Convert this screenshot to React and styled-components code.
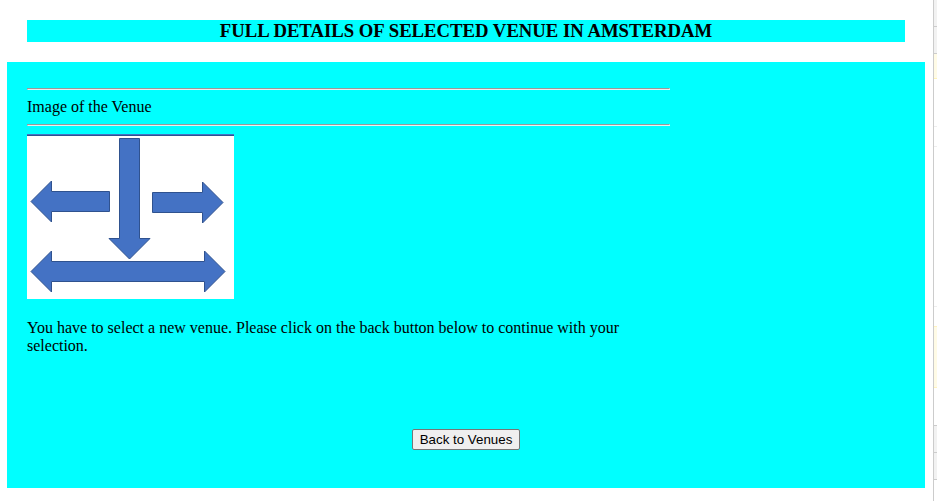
import React from "react";
import styled, { createGlobalStyle } from "styled-components";

const GlobalStyle = createGlobalStyle`
  * { box-sizing: border-box; }
  body {
    margin: 0;
    background: #fff;
    color: #000;
    font: 16px/18px "Liberation Serif", "Times New Roman", serif;
    overflow: hidden;
  }
`;

const Window = styled.div`
  display: flex;
  height: 501px;
`;

const Page = styled.main`
  width: 933px;
  padding: 20px 8px 0 7px;
`;

const Title = styled.h3`
  margin: 0 20px 20px;
  height: 22px;
  background: #0ff;
  font-size: 18.72px;
  line-height: 22px;
  text-align: center;
`;

const Panel = styled.section`
  display: flex;
  flex-direction: column;
  height: 426px;
  padding: 26px 20px 0;
  background: #0ff;
`;

const Details = styled.div`
  width: 643px;
`;

const Rule = styled.hr`
  margin: 0;
  height: 2px;
  border: 1px solid;
  border-color: #9a9a9a #eee #eee #9a9a9a;
`;

const Caption = styled.p`
  margin: 0;
  padding: 8px 0;
`;

const Picture = styled.svg`
  display: block;
  margin-top: 8px;
  background: #fff;
`;

const Message = styled.p`
  margin: 20px 0 0;
`;

const Actions = styled.div`
  display: flex;
  justify-content: center;
  margin-top: 74px;
`;

const Button = styled.button`
  width: 108px;
  height: 21px;
  padding: 0;
  border: 1px solid #767676;
  border-radius: 2px;
  background: #efefef;
  color: #000;
  font: 13.333px/18px "Liberation Sans", Arial, sans-serif;
  white-space: nowrap;
`;

const Inspector = styled.aside`
  width: 4px;
  border-left: 1px solid #ccc;
`;

const InspectorRow = styled.div`
  height: ${(p) => p.$height}px;
  background: ${(p) => p.$fill || "#fff"};
  border-bottom: 1px solid ${(p) => p.$line};
`;

const rows = [
  [27, "#f2f2f2", "#ccc"],
  [27, "#f2f2f2", "#ccc"],
  [25, "#fffbe6", "#fff3b8"],
  [48, "#fff", "#eee"],
  [20, "#fff", "#eee"],
  [160, "#fff", "#eee"],
  [20, "#fff", "#fff3c0"],
  [61, "#fffbe6", "#fff3c0"],
  [38, "#fff", "#ccc"],
  [27, "#f2f2f2", "#ccc"],
  [27, "#f2f2f2", "#ccc"],
];

export default function App() {
  return (
    <>
      <GlobalStyle />
      <Window>
        <Page>
          <Title>FULL DETAILS OF SELECTED VENUE IN AMSTERDAM</Title>
          <Panel>
            <Details>
              <Rule />
              <Caption>Image of the Venue</Caption>
              <Rule />
              <Picture width="207" height="165" viewBox="0 0 207 165" role="img" aria-label="Venue">
                <rect width="207" height="1" fill="#4472c4" />
                <rect y="1" width="207" height="1" fill="#2f528f" />
                <g fill="#4472c4" stroke="#2f528f" strokeWidth="1">
                  <path d="M92.5 4.5H112.5V104.5H123L102.5 125L82 104.5H92.5Z" />
                  <path d="M4 67.5L24.5 47V57.5H82.5V77.5H24.5V88Z" />
                  <path d="M196 68.5L175.5 48V58.5H125.5V78.5H175.5V89Z" />
                  <path d="M4 137.5L24.5 117V127.5H177.5V117L198 137.5L177.5 158V147.5H24.5V158Z" />
                </g>
              </Picture>
              <Message>
                You have to select a new venue. Please click on the back button below to continue with your
                selection.
              </Message>
            </Details>
            <Actions>
              <Button type="button">Back to Venues</Button>
            </Actions>
          </Panel>
        </Page>
        <Inspector>
          {rows.map(([height, fill, line], i) => (
            <InspectorRow key={i} $height={height} $fill={fill} $line={line} />
          ))}
        </Inspector>
      </Window>
    </>
  );
}
